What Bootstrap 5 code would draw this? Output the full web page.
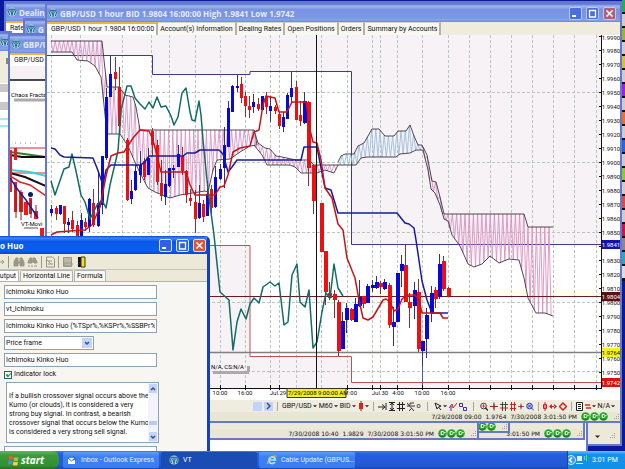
<!DOCTYPE html>
<html lang="en">
<head>
<meta charset="utf-8">
<meta name="viewport" content="width=device-width, initial-scale=1">
<title>GBP/USD 1 hour BID</title>
<link href="https://cdn.jsdelivr.net/npm/bootstrap@5.3.0/dist/css/bootstrap.min.css" rel="stylesheet">
<style>
:root{--face:#ece9d8;--ui:Roboto,"Liberation Sans",sans-serif}
html,body{height:100%}
body{font-family:var(--ui);font-size:7px;line-height:9px;color:#111;background:#0a1a9c;overflow:hidden}
button,input,select,textarea{font:inherit;color:inherit;border-radius:0}
button{border:0;background:none;padding:0}
svg{display:block;flex:none}
.desk{min-height:0}
.win{position:absolute;border:2px solid #6578cc;background:var(--face);overflow:hidden;display:flex;flex-direction:column}
.caption{height:18px;flex:none;gap:2px;padding:0 4px 0 1px;background:linear-gradient(#5876cf,#a3b7f0 12%,#7993e2 30%,#7a96e4 75%,#86a3ee 90%,#6c84d4);color:#e4ebff;font-family:"Open Sans",sans-serif;font-size:8px;font-weight:700;white-space:nowrap}
.caption h1,.caption h2{font:inherit;margin:0}
.ctl{width:13px;height:13px;border:1px solid #b8c8f8;border-radius:2px;background:#4a70dc;display:grid;place-items:center}
.ctl.shut{background:#b0607c}
.tabstrip{height:13px;flex:none;background:#efecde;white-space:nowrap}
.tabstrip button{background:#f8f7f2;border-right:2px solid #b5b2a6;border-top:1px solid #d6d3c8;padding:0 2px}
.tabstrip button.on{background:#fff;border-top:2px solid #f2b13c;padding:0 2px 0 4px}
.chart{flex:1 1 0;min-height:0;width:100%;background:#fff}
.bar{height:13px;flex:none;gap:2px;background:#efece0;border-top:1px solid #fff;padding-right:5px}
.bar .flat{height:11px;display:flex;align-items:center;gap:1px}
.rule{width:1px;height:9px;margin:0 2px;background:#aaa794}
.statusline{height:9px;flex:none;gap:4px;background:#e9e6d6;font-family:"DejaVu Sans",sans-serif;font-size:6px;white-space:nowrap;color:#111}
.arrow{width:9px;height:9px;background:#c3d3fb;display:grid;place-items:center}
.w-deal{left:4px;top:1px;right:3px;bottom:5px}
.w-two{left:23px;top:18px;width:120px;height:60px}
.w-edge{left:-2px;top:31px;width:14px;bottom:0}
.w-rest{left:2px;right:37px;top:300px;bottom:0;background:#fff;border-bottom:0}
.w-three{left:8px;top:33px;right:146px;bottom:11px}
.w-b{left:300px;right:115px;top:300px;bottom:18px}
.w-c{left:280px;right:40px;top:300px;bottom:11px}
.w-main{left:45px;top:2px;right:3px;bottom:28px}
.w-dlg{left:-80px;width:290px;top:236px;bottom:-4px;border:3px solid #1440c8;border-top:0;border-radius:0 5px 0 0;background:#f7f6f3}
.w-dlg .caption{background:linear-gradient(#0b49d0,#3e86fb 12%,#0a58e6 30%,#0660f4 80%,#0648cc);color:#fff;padding-left:77px;padding-right:1px}
.w-dlg .ctl{background:#2d62e6;border-color:#dce6ff}
.w-dlg .ctl.shut{background:#dd5636}
.tools{height:16px;flex:none;background:var(--face);border-bottom:1px solid #c9c5b2;padding-left:74px}
.w-dlg .tabstrip{padding-left:69px;height:12px;background:var(--face);border-bottom:1px solid #a9b5bf}
.w-dlg .tabstrip button{border:1px solid #a9b5b8;border-bottom:0;padding:0 2px;margin-right:1px;border-radius:2px 2px 0 0}
.fields{padding:3px 50px 0 81px;gap:3px}
.fields input[type=text],.fields select{width:100%;height:14px;border:1px solid #8ba3b5;background:#fff;padding:0 1px;line-height:11px}
.pick{width:90px;position:relative}
.fields .pick select{appearance:none;display:block}
.pick svg{position:absolute;right:2px;top:2px;pointer-events:none}
.fields input[type=checkbox]{appearance:none;width:8px;height:8px;border:1px solid #2c5c7c;background:#fff;margin:0 2px 0 0;display:grid;place-items:center}
.fields input[type=checkbox]:checked::after{content:"";width:5px;height:3px;border:solid #21a121;border-width:0 0 1px 2px;transform:rotate(-45deg)}
.note{margin:0 -2px 0 2px;border:1px solid #8ba3b5;background:#fff;height:61px}
.note textarea{border:0;resize:none;overflow:hidden;flex:1;min-width:0;padding:9px 0 0 2px;line-height:9px;white-space:pre;outline:0;background:transparent}
.scroll{width:10px;background:#f3f4fb;padding:1px}
.scroll .arrow{width:8px}
.taskbar{height:18px;flex:none;background:linear-gradient(#3a7cf0,#245edc 20%,#2259d8 80%,#1a48b4);color:#fff;white-space:nowrap;z-index:5}
.start{width:59px;gap:2px;background:linear-gradient(#63b560,#3a9a3a 25%,#349034 80%,#276f27);border-radius:0 7px 7px 0;color:#fff;font-family:"Open Sans",sans-serif;font-weight:700;font-style:italic;font-size:10px}
.task{width:96px;margin:1px 1px;border-radius:2px;background:linear-gradient(#5a9cfb,#3c81f3 30%,#3a7df0);color:#e8f0ff}
.task.on{background:#1b4cb4;color:#fff}
.tray{width:58px;background:linear-gradient(#5fc4fa,#1491ea 20%,#1290e8);border-left:1px solid #0c4ca8}
.sidecells{position:absolute;right:0;top:0;width:3px;height:281px;background:#111}
.sidecells i{height:12px;margin-bottom:2px;display:block;flex:none}
</style>
<script src="https://cdn.jsdelivr.net/npm/bootstrap@5.3.0/dist/js/bootstrap.bundle.min.js"></script>
</head>
<body class="d-flex flex-column">
<svg width="0" height="0" class="position-absolute" aria-hidden="true">
  <symbol id="vt" viewBox="0 0 11 11"><circle cx="5.5" cy="5.5" r="5" fill="#a8d4e8"/><path d="M1 3.500 3 9M5.500 2v8M10 3.500 8 9M3 3c0 3 2.500 2 2.500 5C5.500 5 8 6 8 3M1.500 2.500h8" fill="none" stroke="#1d5f8c" stroke-width="1.100"/></symbol>
  <symbol id="min" viewBox="0 0 9 9"><path d="M1 7h4" stroke="#fff" stroke-width="2"/></symbol>
  <symbol id="max" viewBox="0 0 9 9"><path d="M1 1.500h7M1.500 1v7h6V1" fill="none" stroke="#fff" stroke-width="1.300"/></symbol>
  <symbol id="x" viewBox="0 0 9 9"><path d="m1.500 1.500 6 6m0-6-6 6" stroke="#fff" stroke-width="1.500"/></symbol>
  <symbol id="down" viewBox="0 0 5 5"><path d="M0 1.500h5L2.500 4z" fill="#222"/></symbol>
  <symbol id="chev" viewBox="0 0 6 6"><path d="m1 2 2 2 2-2" fill="none" stroke="#33508c" stroke-width="1.500"/></symbol>
  <symbol id="lamp" viewBox="0 0 9 9"><circle cx="4.500" cy="4.500" r="4.300" fill="#28a828"/><path d="M1 6c1 2 4 2.500 6 .5" stroke="#0b720b" fill="none"/><path d="M5.500 2.500H3.200v3h2.300M5 4.200l2.500-.7" fill="none" stroke="#fff"/></symbol>
  <symbol id="grip" viewBox="0 0 8 8"><path d="M6 1h1v1H6zM4 3h1v1H4zM6 3h1v1H6zM2 5h1v1H2zM4 5h1v1H4zM6 5h1v1H6z" fill="#a5a292"/></symbol>
  <symbol id="cross" viewBox="0 0 9 9"><path d="M4.500 0v9M0 4.500h9" stroke="#333"/><path d="M4.500 2v5M2.500 4.500h4" stroke="#c61c1c" stroke-width="1.400"/></symbol>
</svg>

<main class="desk position-relative flex-grow-1 overflow-hidden">
  <div class="sidecells d-flex flex-column" id="cells"></div>

  <section class="win w-deal">
    <div class="caption d-flex align-items-center"><svg width="10" height="10"><use href="#vt"/></svg><h2>Dealing</h2></div>
    <div class="tabstrip d-flex"><button class="on" type="button">Rate</button></div>
    <div class="mt-auto d-flex justify-content-end align-items-center gap-2 pe-1 pb-1"><svg width="5" height="5"><use href="#down"/></svg><svg width="8" height="8"><use href="#grip"/></svg></div>
  </section>
  <section class="win w-two">
    <div class="caption d-flex align-items-center"><svg width="10" height="10"><use href="#vt"/></svg><h2>G</h2></div>
  </section>
  <section class="win w-rest"></section>
  <section class="win w-edge">
    <div class="caption d-flex align-items-center p-0"><svg width="10" height="10"><use href="#vt"/></svg></div>
    <svg viewBox="0 51 9 390" width="9" height="390"><path d="M0 51h9v390H0z" fill="#fff"/><path d="M0 51h9v32H0z" fill="#efecde"/><path d="M0 84h9v8H0zM0 102h9v8H0z" fill="#c8c8c8"/><path d="M0 119h9M0 126h9" stroke="#48d8e8"/><path d="M7 58v6" stroke="#222"/></svg>
  </section>
  <section class="win w-c">
    <div class="statusline d-flex align-items-center justify-content-end mt-auto"><span>3:01:50 PM</span><span class="d-flex"><svg width="9" height="9"><use href="#lamp"/></svg><svg width="9" height="9"><use href="#lamp"/></svg><svg width="9" height="9"><use href="#lamp"/></svg></span><svg width="8" height="8"><use href="#grip"/></svg></div>
  </section>
  <section class="win w-b">
    <div class="statusline d-flex align-items-center justify-content-end mt-auto"><span class="d-flex"><svg width="9" height="9"><use href="#lamp"/></svg><svg width="9" height="9"><use href="#lamp"/></svg></span><svg width="8" height="8"><use href="#grip"/></svg></div>
  </section>
  <section class="win w-three">
    <div class="caption d-flex align-items-center"><svg width="10" height="10"><use href="#vt"/></svg><h2>GBP/U</h2></div>
    <div class="tabstrip d-flex"><button class="on" type="button">GBP/USD</button></div>
    <svg viewBox="10 66 36 355" width="36" height="355">
      <path d="M10 66h36v355H10z" fill="#fff"/><path d="M10 66h36v14H10z" fill="#f5f1f5"/><path d="M10 80h36" stroke="#111" stroke-width="1.500"/>
      <path d="M14 100h32" stroke="#aaa" stroke-width="3"/><text x="11" y="97" font-size="6">Chaos Fracta</text>
      <path d="M10 148h36M10 173h36" stroke="#d22"/><path d="M15 143h23" stroke="#888" stroke-dasharray="1 4"/>
      <path d="m10 152 14 2 22 3" stroke="#2d7d2d" stroke-width="2" fill="none"/><path d="M10 155l12 2h24" stroke="#111" stroke-width="2" fill="none"/>
      <path d="m10 170 20 2 16 4" stroke="#35d5df" stroke-width="2" fill="none"/><path d="m10 173 15 4 21 9" stroke="#111" stroke-width="2" fill="none"/>
      <path d="m10 176 10 6 10 3 16 11" stroke="#d22" stroke-width="1.500" fill="none"/>
      <path d="M10 150h2v42h-2zM14 148h3v12h-3zM14 182h3v30h-3zM19 192h4v20h-4zM24 202h4v13h-4zM29 198h3v16h-3zM34 211h4v8h-4zM40 228h4v10h-4z" fill="#ed1c1c"/>
      <path d="M16 186v32M21 190v30M31 200v18M36 205v10" stroke="#8c1d1d"/><path d="m10 178 8 12 8 10 12 18" stroke="#1b1ba4" stroke-width="1.500" fill="none"/><circle cx="30.500" cy="194.500" r="2.500" fill="#101a5c"/>
      <path d="M24 228h14" stroke="#aaa" stroke-width="2"/><text x="21" y="226" font-size="6">VT-Movi</text>
    </svg>
    <div class="statusline d-flex align-items-center justify-content-end mt-auto"><span>7/30/2008 10:40</span><span>1.9829</span><span>7/30/2008 3:01:50 PM</span><span class="d-flex"><svg width="9" height="9"><use href="#lamp"/></svg><svg width="9" height="9"><use href="#lamp"/></svg><svg width="9" height="9"><use href="#lamp"/></svg></span><svg width="8" height="8"><use href="#grip"/></svg></div>
  </section>

  <section class="win w-main">
    <div class="caption d-flex align-items-center"><svg width="10" height="10"><use href="#vt"/></svg><h1 class="flex-grow-1">GBP/USD 1 hour BID 1.9804 16:00:00 High 1.9841 Low 1.9742</h1>
      <div class="d-flex gap-1"><button class="ctl" type="button" aria-label="Minimize"><svg width="9" height="9"><use href="#min"/></svg></button><button class="ctl" type="button" aria-label="Maximize"><svg width="9" height="9"><use href="#max"/></svg></button><button class="ctl shut" type="button" aria-label="Close"><svg width="9" height="9"><use href="#x"/></svg></button></div>
    </div>
    <div class="tabstrip d-flex"><button class="on" type="button">GBP/USD 1 hour 1.9804 16:00:00</button><button type="button">Account(s) Information</button><button type="button">Dealing Rates</button><button type="button">Open Positions</button><button type="button">Orders</button><button type="button">Summary by Accounts</button></div>
    <svg class="chart" id="chart" viewBox="47 35 573 364" preserveAspectRatio="xMinYMin meet" font-size="6" role="img" aria-label="Hourly price chart with Ichimoku indicator">
      <path d="M47 35h573v364H47z" fill="#fff"/>
      <path d="M47 35h555v209H351V71H250v3h-97V55H47zM47 245h203v111h101v26h251v6H47z" fill="#f6f2f6"/>
      <path d="M351 289h251v6H351z" fill="#fffff0"/>
      <g id="grid" stroke="#bcc8bc" stroke-dasharray="3 2"></g>
      <path d="M47 55.500h105.500v19H250v-3h101.500v173H602" fill="none" stroke="#3a3a9c"/>
      <path d="M200 245.500h50v111h101.500v26H602" fill="none" stroke="#c05058"/>
      <path d="M422.500 351v37" stroke="#5055b0"/>
      <g id="clouds" fill="none"></g>
      <path d="M47 352.500h555" stroke="#808080" stroke-width="1.500"/>
      <path d="M47 296.500h555" stroke="#6c1c20"/>
      <g id="candles"></g>
      <g fill="none" stroke-width="1.500" stroke-linejoin="round">
        <path stroke="#126c66" d="M51 181 55 195 64 169 69 167 72 154 76 171 81 195 85 202 90 219 97 205 102 200 106 208 110 185 114 168 118 151 121 110 127 86H131L135 98 140 104 145 109 149 102 153 108 157 97 161 107 166 106 171 116 174 125 178 117 182 93 186 88 190 112 192 120 195 121 199 101 201 115 203 140 208 190 214 235 220 292 229 300 233 350 237 322 241 309 246 319 250 304 254 298 259 303 263 287 270 282 275 286 279 283 284 325 288 322 292 275 297 264 300 302 305 307 309 290 313 348 317 342 322 312 326 293 330 298 334 264 338 288 343 296"/>
        <path stroke="#1a1aa0" d="M51 148 55 149 60 155 64 157 93 158 97 168 103 185 106 170 111 165H140L144 163 149 156H183L187 153H195L200 150H219L223 154 228 172 232 167 237 160H301L304 147H317L325 188 331 190 338 213H397L405 223 409 224 414 228 416 240 422 281 427 300 432 313H448"/>
        <path stroke="#c81414" d="M51 235 57 232 70 231 85 230 92 225 100 207 106 176 111 156 118 153 124 152 133 138 140 130 149 131 153 140 161 172H186L190 185 195 195H215L220 187 224 186 228 175 233 152 240 148 250 146 254 132 259 130 263 105 266 96 275 98 279 112H287L292 102H306L310 130 313 142 317 143 321 160 325 188 332 198 338 224 343 230 347 258 351 268 355 278 359 300 363 318 368 320 373 317 383 300 386 299 390 302 394 311 398 309 402 299 407 295H415L419 300 422 313H440L443 318H448"/>
      </g>
      <path d="M316.500 35v353" stroke="#111"/>
      <path d="M47 388.500h555M601.500 35v353.500" stroke="#111"/>
      <g id="axis" fill="#111" text-anchor="middle"></g>
      <path d="M287 388.500h59v9h-59z" fill="#f4f01c" stroke="#333"/><text x="288" y="395">7/29/2008 9:00:00 AM</text>
      <path d="M213 371h36v3h-36zM247 366h3v6h-3z" fill="#aaa"/><text x="211" y="369">N/A, CS:N/A</text>
      <g id="tags"></g>
    </svg>
    <div class="bar d-flex align-items-center justify-content-end">
      <button class="arrow" type="button" aria-label="Scroll left"></button><button class="arrow" type="button" aria-label="Scroll right"><svg width="6" height="8" viewBox="0 0 6 8"><path d="m2 1 3 3-3 3" fill="none" stroke="#33508c" stroke-width="1.500"/></svg></button>
      <span class="rule"></span>
      <button class="flat" type="button">GBP/USD<svg width="4" height="4"><use href="#down"/></svg></button>
      <button class="flat" type="button">M60<svg width="4" height="4"><use href="#down"/></svg></button>
      <button class="flat" type="button">BID<svg width="4" height="4"><use href="#down"/></svg></button>
      <button class="flat" type="button" aria-label="Candles"><svg width="6" height="10" viewBox="0 0 6 10"><path d="M3 0v10" stroke="#a11"/><path d="M1 2h4v6H1z" fill="#dd2020"/></svg><svg width="4" height="4"><use href="#down"/></svg></button>
      <span class="rule"></span>
      <button class="flat" type="button" aria-label="Shift"><svg width="9" height="9" viewBox="0 0 9 9"><path d="M0 5h6M4 2.500 7 5 4 7.500M8 1v7" fill="none" stroke="#222"/></svg></button>
      <button class="flat" type="button" aria-label="Fit"><svg width="6" height="9" viewBox="0 0 6 9"><path d="M0 .5h6M0 8.500h6M3 1v7M1 3l2-2 2 2M1 6l2 2 2-2" fill="none" stroke="#222"/></svg></button>
      <button class="flat" type="button" aria-label="Grid"><svg width="8" height="9" viewBox="0 0 8 9"><path d="M2.500 0v9M5.500 0v9M0 2.500h8M0 6.500h8" stroke="#222"/></svg></button>
      <button class="flat" type="button" aria-label="Percent"><svg width="8" height="9" viewBox="0 0 8 9"><path d="m0 1 7 8M0 4h3V1h4M4 4h4M5 6l-3 3" fill="none" stroke="#333"/></svg></button>
      <button class="flat" type="button">o</button>
      <span class="rule mx-1"></span>
      <button class="flat" type="button" aria-label="Pointer"><svg width="8" height="9" viewBox="0 0 8 9"><path d="m1 1 6 3-2.500 1L7 8M1 1l2 6 1.500-2" fill="none" stroke="#222"/></svg><svg width="4" height="4"><use href="#down"/></svg></button>
      <button class="flat" type="button" aria-label="Trend"><svg width="8" height="9" viewBox="0 0 8 9"><path d="m0 6 3-4 1 4 4-5" fill="none" stroke="#c22"/><path d="M2 4v5" stroke="#33b"/></svg></button>
      <button class="flat" type="button" aria-label="Objects"><svg width="8" height="9" viewBox="0 0 8 9"><path d="M.5 1.500h3v3h-3zM4.500 5.500h3v3h-3z" fill="none" stroke="#33b"/><path d="m3 4 2 2" stroke="#c22"/></svg></button>
      <span class="rule mx-1"></span>
      <button class="flat" type="button" aria-label="Zoom"><svg width="8" height="9" viewBox="0 0 9 9"><circle cx="4" cy="4" r="3.200" fill="#fff" stroke="#222"/><path d="m6 6 3 3" stroke="#222" stroke-width="1.500"/><path d="M4 2v4M2 4h4" stroke="#c22"/></svg></button>
      <button class="flat" type="button" aria-label="Narrow"><svg width="8" height="9"><use href="#cross"/></svg></button>
      <button class="flat" type="button" aria-label="Widen"><svg width="8" height="9" viewBox="0 0 8 9"><path d="M2.500 0v9M5.500 0v9M0 2.500h8" stroke="#444"/><path d="M0 6h8" stroke="#c22"/></svg></button>
      <button class="flat" type="button" aria-label="Compress"><svg width="6" height="9" viewBox="0 0 6 9"><path d="M1.500 0v9M4.500 0v9M0 2.500h6M0 6.500h6" stroke="#c22"/></svg></button>
      <button class="flat" type="button" aria-label="Expand"><svg width="6" height="9"><use href="#cross"/></svg></button>
      <button class="flat" type="button" aria-label="Zoom reset"><svg width="8" height="9" viewBox="0 0 9 9"><circle cx="4" cy="4" r="3.200" fill="#cdd8ff" stroke="#22a"/><path d="m6 6 3 3M2 2l4 4m0-4L2 6" stroke="#22a"/></svg></button>
      <span class="rule"></span>
      <button class="flat" type="button" aria-label="Vertical"><svg width="4" height="9" viewBox="0 0 4 9"><path d="M2 0v9M.500 2.500h3v4h-3z" fill="none" stroke="#c22"/></svg></button>
      <button class="flat" type="button" aria-label="Horizontal"><svg width="8" height="9" viewBox="0 0 8 9"><path d="M0 4.500 3 2v5zM8 4.500 5 2v5zM2 4h4v1H2z" fill="#c22"/></svg></button>
      <button class="flat" type="button" aria-label="Both"><svg width="8" height="9" viewBox="0 0 8 9"><path d="m4 1 3.500 3.500L4 8 .500 4.500z" fill="none" stroke="#c22" stroke-width="1.500"/></svg></button>
      <span class="rule"></span>
      <button class="flat" type="button" aria-label="Template"><svg width="7" height="9" viewBox="0 0 7 9"><path d="M.500.500h6v8h-6zM2 2.500h3M2 4.500h3M2 6.500h3" fill="#fff" stroke="#222"/></svg></button>
      <button class="flat" type="button" aria-label="Line colour"><svg width="6" height="9" viewBox="0 0 6 9"><path d="M0 3h5M1 6h5" stroke="#d22" stroke-width="1.500"/></svg><svg width="4" height="4"><use href="#down"/></svg></button>
      <button class="flat" type="button">N/A<svg width="4" height="4"><use href="#down"/></svg></button>
    </div>
    <div class="statusline d-flex align-items-center justify-content-end"><span>7/29/2008 09:00</span><span>1.9764</span><span>7/30/2008 3:01:50 PM</span><span class="d-flex"><svg width="9" height="9"><use href="#lamp"/></svg><svg width="9" height="9"><use href="#lamp"/></svg><svg width="9" height="9"><use href="#lamp"/></svg></span><svg width="8" height="8"><use href="#grip"/></svg></div>
  </section>

  <section class="win w-dlg">
    <div class="caption d-flex align-items-center"><h2 class="flex-grow-1">o Huo</h2>
      <div class="d-flex gap-1"><button class="ctl" type="button" aria-label="Minimize"><svg width="9" height="9"><use href="#min"/></svg></button><button class="ctl" type="button" aria-label="Maximize"><svg width="9" height="9"><use href="#max"/></svg></button><button class="ctl shut" type="button" aria-label="Close"><svg width="9" height="9"><use href="#x"/></svg></button></div></div>
    <div class="tools d-flex align-items-center">
      <svg width="132" height="12" viewBox="0 0 132 12" fill="none" stroke="#99968a"><path d="M3 6h4l-2-2m2 2-2 2M11.500 0v12M44.500 0v12M61.500 0v12"/><path d="M17 10V6l2-4h2v4h2V2h2l2 4v4h-4V7h-2v3z" fill="#99968a"/><path d="M31 6l2-4h2v3h1V2h2l2 4v1h-3V6h-2v1h-4zM31 10h2m1 0h2m1 0h3" fill="#99968a"/><path d="M49.500 1h6l2 2v8h-8zM51 5h4M51 8h5M49 3l5 5"/><path d="M66.500 1.500h8v9h-8zM67 7h8v3h-8z" fill="#bbb8aa"/><path d="M81 1h3v10h-3z" fill="#111" stroke="none"/><path d="M84 1h4v10h-4z" fill="#f2e11c" stroke="#333"/><path d="M81 9l2-3" stroke="#22c"/></svg>
    </div>
    <div class="tabstrip d-flex"><button class="on" type="button">Output</button><button type="button">Horizontal Line</button><button type="button">Formula</button></div>
    <form class="fields d-flex flex-column">
      <input type="text" aria-label="Name" value="Ichimoku Kinko Huo">
      <input type="text" aria-label="Function" value="vt_Ichimoku">
      <input type="text" aria-label="Short name" value="Ichimoku Kinko Huo (%TSpr%,%KSPr%,%SSBPr%,">
      <div class="pick"><select aria-label="Placement"><option>Price frame</option></select><svg width="10" height="10" viewBox="0 0 10 10"><path d="M0 0h10v10H0z" fill="#c3d3fb"/><path d="m3 4 2 2 2-2" fill="none" stroke="#33508c" stroke-width="1.500"/></svg></div>
      <input type="text" aria-label="Caption" value="Ichimoku Kinko Huo">
      <div class="d-flex align-items-center"><input type="checkbox" id="lock" checked><label for="lock">Indicator lock</label></div>
      <div class="note d-flex"><textarea aria-label="Description" readonly>If a bullish crossover signal occurs above the
Kumo (or clouds), it is considered a very
strong buy signal. In contrast, a bearish
crossover signal that occurs below the Kumo
is considered a very strong sell signal.</textarea>
        <div class="scroll d-flex flex-column justify-content-between"><span class="arrow"><svg width="6" height="6" viewBox="0 0 6 6"><path d="m1 4 2-2 2 2" fill="none" stroke="#33508c" stroke-width="1.500"/></svg></span><span class="mt-3 pt-1"><svg width="8" height="4"><path d="M0 0h8v4H0z" fill="#b7cafa"/></svg></span><span class="arrow"><svg width="6" height="6"><use href="#chev"/></svg></span></div></div>
      <input type="text" aria-label="Extra">
    </form>
  </section>
</main>

<footer class="taskbar d-flex">
  <button class="start d-flex align-items-center ps-2" type="button"><svg width="11" height="11" viewBox="0 0 11 11"><path d="M1 1.500q2-1.500 4 0L4.500 5Q2.500 4 .5 5z" fill="#f05a28"/><path d="M6 2q2 1.200 4.500 0L10 5.500q-2 1-4.500 0z" fill="#8cd03c"/><path d="M.5 6q2-1 4 0L4 9.500q-2-1-4 0z" fill="#4c8cf8"/><path d="M5.300 6.500q2 1 4.500 0L9.500 10q-2 1-4.700 0z" fill="#fcd030"/></svg>start</button>
  <button class="task d-flex align-items-center gap-1 ms-1 ps-1" type="button"><svg width="10" height="10" viewBox="0 0 10 10"><path d="M1 3h7v6H1z" fill="#fff"/><path d="m1 3 3.500 3L8 3M6 1l3 3-3 1" fill="none" stroke="#2468c8"/></svg>Inbox - Outlook Express</button>
  <button class="task on d-flex align-items-center gap-1 ps-2" type="button"><svg width="10" height="10"><use href="#vt"/></svg>VT</button>
  <button class="task d-flex align-items-center gap-1 ps-2" type="button"><svg width="10" height="10" viewBox="0 0 10 10"><path d="M8 7A3.300 3.300 0 1 1 8.500 5H3" fill="none" stroke="#a8e4ff" stroke-width="1.700"/><path d="M1 9C-1 6 7-1 9.500 1.500" fill="none" stroke="#f4c83c"/></svg>Cable Update (GBPUS...</button>
  <div class="tray ms-auto d-flex align-items-center"><svg width="20" height="14" viewBox="0 0 20 14"><circle cx="3" cy="7" r="4.500" fill="#3d9cf6" stroke="#d5ecff"/><path d="M4 4.500 1.500 7 4 9.500" fill="none" stroke="#fff" stroke-width="1.500"/><path d="M9 3h5v5H9zM8 10h7v1H8z" fill="#dfefff"/><path d="M16.500 3v4M18.500 2v6" stroke="#5ee05e"/></svg><span class="ms-1">3:01 PM</span></div>
</footer>

<script>
const NS='http://www.w3.org/2000/svg';
function add(parent,tag,attrs,text){const e=document.createElementNS(NS,tag);for(const k in attrs)e.setAttribute(k,attrs[k]);if(text)e.textContent=text;document.getElementById(parent).append(e)}
[51,80,122,151,169,195,220,245,270,279,296,321,347,372,380,397,422,448,469,490,511,532,553,574,596].forEach(x=>add('grid','path',{d:`M${x+.5} 35V388`}));
[92,162,232,302,371].forEach(y=>add('grid','path',{d:`M47 ${y+.5}H601`}));

function at(line,x){for(let i=1;i<line.length;i++){const a=line[i-1],b=line[i];if(x<=b[0])return a[1]+(b[1]-a[1])*(x-a[0])/((b[0]-a[0])||1)}return line[line.length-1][1]}
function cloud(top,bottom,hatch){
  const end=Math.min(top[top.length-1][0],bottom[bottom.length-1][0]);let d='';
  for(let x=top[0][0],i=0;x<=end;x+=2.1,i++)d+=(i?'L':'M')+x.toFixed(1)+' '+at(i%2?bottom:top,x).toFixed(1);
  add('clouds','path',{d,stroke:hatch,'stroke-width':.9});
  [top,bottom].forEach(l=>add('clouds','path',{d:'M'+l.map(p=>p.join(' ')).join('L'),stroke:'#3d3440','stroke-width':.9}));
}
cloud([[51,41],[102,41],[104,60],[107,87],[119,87],[125,95],[133,97],[136,107],[140,130],[254,130],[257,145]],
 [[51,52],[72,52],[77,60],[88,61],[95,66],[101,77],[104,105],[107,134],[120,134],[128,146],[134,160],[140,173],[148,188],[155,192],[170,198],[180,195],[205,191],[208,192],[213,170],[217,160],[230,159],[240,152],[250,146],[257,145]],'#d993c6');
cloud([[254,130],[258,143],[265,148],[270,149],[276,156],[282,157],[296,160],[309,160],[314,165],[338,165]],
 [[254,145],[262,155],[267,165],[290,165],[295,167],[301,173],[317,173],[325,170],[334,173],[338,165]],'#d993c6');
cloud([[338,162],[341,156],[345,154],[354,154],[358,146],[364,143],[372,129],[379,129],[385,136],[394,136],[398,131],[406,131],[410,125],[414,136],[418,145],[422,145],[424,150]],
 [[338,165],[356,165],[361,158],[367,157],[396,157],[400,154],[410,153],[416,150],[424,150]],'#9dbedd');
cloud([[423,147],[427,155],[432,181],[436,182],[440,197],[444,214],[524,214],[528,227],[553,227]],
 [[423,150],[428,170],[431,189],[435,193],[440,205],[444,219],[448,221],[452,235],[460,246],[468,264],[474,267],[482,264],[490,256],[499,263],[509,259],[519,260],[524,278],[528,298],[536,313],[545,313],[553,316]],'#dc8fc0');

/* centre x, high, low, body top, body bottom, rising */
[[51,205,216,209,213,1],[56,206,220,208,214,0],[60,205,215,205,214,1],[64,206,233,206,224,0],[68,218,233,222,225,1],[72,211,232,220,229,0],[77,221,237,225,236,0],[81,213,237,220,236,1],[85,218,231,222,227,0],[89,198,232,199,227,1],[93,189,227,203,225,0],[98,173,227,203,226,1],[102,156,214,156,205,1],[106,88,160,97,158,1],[110,55,97,74,97,1],[115,57,90,72,79,0],[119,67,130,87,126,0],[127,138,201,140,200,0],[131,180,204,191,199,1],[135,165,191,171,190,1],[140,151,183,165,175,1],[144,158,180,161,177,0],[148,148,175,158,175,1],[152,128,156,131,145,0],[157,140,185,145,182,0],[161,160,201,183,196,0],[165,170,205,184,197,1],[169,168,187,168,186,1],[173,165,178,168,170,1],[178,145,167,154,167,1],[182,147,175,156,171,0],[186,170,203,171,195,0],[190,189,206,198,201,0],[195,190,233,202,219,0],[199,185,219,203,218,1],[203,200,222,204,217,0],[207,181,216,194,216,1],[211,185,215,189,208,0],[215,166,208,177,207,1],[220,164,180,169,179,1],[224,127,188,145,168,1],[228,101,147,108,147,1],[232,85,112,86,112,1],[237,75,92,86,88,1],[241,77,103,84,98,0],[245,92,117,96,106,0],[249,96,118,106,110,0],[253,94,113,102,107,1],[258,98,111,104,109,0],[262,96,110,96,110,1],[266,92,114,97,107,0],[270,96,122,106,111,1],[275,105,114,107,111,0],[279,112,129,114,126,0],[283,112,132,117,127,1],[287,93,119,95,119,1],[291,72,104,88,97,1],[296,81,120,87,120,0],[300,101,126,115,121,0],[304,92,124,101,123,1],[308,101,186,102,168,0],[313,165,214,165,201,0],[321,203,252,203,252,0],[325,251,305,251,292,0],[329,282,300,293,298,0],[334,290,318,294,300,0],[338,300,356,302,351,0],[342,312,349,321,349,1],[346,303,333,308,320,1],[351,308,321,309,320,0],[355,298,322,304,322,1],[359,280,307,297,306,1],[363,296,308,296,304,0],[367,284,303,286,303,1],[372,280,292,285,288,1],[376,276,289,282,288,1],[380,281,294,283,287,0],[384,279,290,282,289,1],[389,283,328,285,325,0],[393,307,346,322,327,1],[397,273,322,273,322,1],[401,255,287,264,271,1],[405,245,302,265,302,0],[409,293,328,302,308,0],[414,282,319,290,306,1],[418,279,352,292,349,0],[422,341,366,341,351,1],[426,308,358,315,339,1],[431,286,322,293,313,1],[435,287,308,290,299,0],[439,254,299,264,297,1],[443,256,291,261,289,0],[448,287,297,288,296,0]]
.forEach(([x,h,l,t,b,up])=>{add('candles','path',{d:`M${x+.5} ${h}V${l}`,stroke:up?'#33337f':'#8f3030'});add('candles','rect',{x:x-1,y:t,width:x>300?4:3,height:b-t,fill:up?'#0808d8':'#ee1010'})});

for(let i=0;i<=24;i++){const y=36+14*i,v=(1.999-i*.001).toFixed(4);add('axis','path',{d:`M599 ${y+.5}h3`,stroke:'#111'});if(i!==15)add('axis','text',{x:611,y:y+3+(i===0),v:null},v)}
[[220,'10:00'],[245,'16:00'],[278,'Jul.29'],[353,':00'],[380,'Jul.30'],[398,'4:00'],[422,'10:00'],[448,'16:00']].forEach(([x,t])=>add('axis','text',{x,y:395},t));
[220,245,270,279,347,372,380,397,422,448,469,490,511,532,553,574,596].forEach(x=>add('axis','path',{d:`M${x+.5} 385v5`,stroke:'#111'}));
[[244,'1.9841','#1414a8','#fff'],[296,'1.9804','#5c1010','#fff'],[352,'1.9764','#f4f01c','#111'],[382,'1.9742','#dc1010','#fff']].forEach(([y,t,bg,fg])=>{add('tags','rect',{x:602,y:y-4,width:18,height:9,fill:bg});add('tags','text',{x:611,y:y+3,fill:fg,'text-anchor':'middle'},t)});
['#22b04a','#ccc','#9ab428','#ccc','#d8c030','#ccc','#a020e0','#ccc','#f07020','#ccc','#2468e0','#ccc','#8cc820','#ccc','#e04848','#ccc','#d01048','#888','#28a8b8','#ddd'].forEach(c=>{const i=document.createElement('i');i.style.background=c;document.getElementById('cells').append(i)});
</script>
</body>
</html>
